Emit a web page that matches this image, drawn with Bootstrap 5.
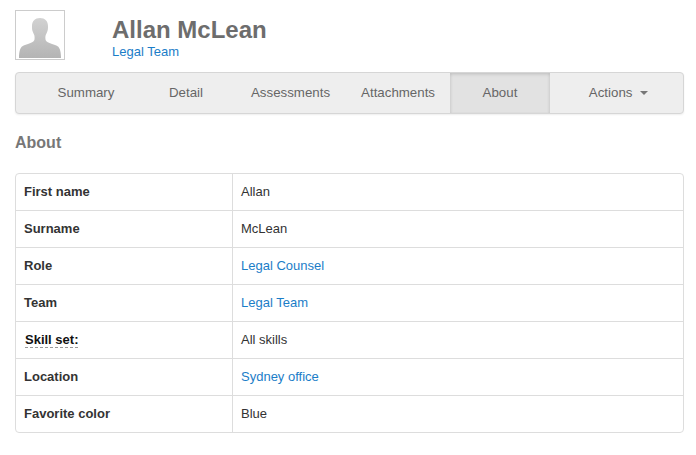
<!DOCTYPE html>
<html lang="en">
<head>
    <meta charset="UTF-8">
    <meta name="viewport" content="width=device-width, initial-scale=1.0">
    <title>Allan McLean - About</title>
    <link rel="stylesheet" href="https://cdn.jsdelivr.net/npm/bootstrap@5.3.0/dist/css/bootstrap.min.css">
    <style>
        body {
            font-family: "Liberation Sans", Arial, sans-serif;
            font-size: 13px;
            color: #333;
            background: #fff;
            padding: 10px 12px 0 15px;
        }
        a { color: #1b7dc8; text-decoration: none; }
        .profile-pic {
            width: 50px;
            height: 50px;
            border: 1px solid #ccc;
            padding: 1px;
            flex: none;
        }
        .profile-pic svg { display: block; width: 100%; height: 100%; }
        .profile-text { margin-left: 47px; padding-top: 6px; }
        .profile-name {
            font-size: 24px;
            font-weight: 700;
            line-height: 28px;
            color: #6d6d6d;
            margin: 0;
        }
        .profile-team { line-height: 15px; margin-top: 0; }
        .tab-bar {
            height: 42px;
            margin-top: 12px;
            padding-left: 20px;
            background: #eee;
            border: 1px solid #d6d6d6;
            border-radius: 4px;
            box-shadow: 0 1px 2px rgba(0,0,0,.07);
        }
        .tab-bar .nav-link {
            min-width: 100px;
            height: 40px;
            line-height: 40px;
            padding: 0 15px;
            text-align: center;
            color: #666;
            font-size: 13.3px;
        }
        .tab-bar .nav-link.active {
            background: #e2e2e2;
            box-shadow: inset 0 2px 3px rgba(0,0,0,.1), inset 2px 0 2px rgba(0,0,0,.03), inset -2px 0 2px rgba(0,0,0,.03);
        }
        .tab-grow { flex: 1 1 auto; }
        .tab-bar .tab-grow .nav-link { padding-left: 19px; }
        .tab-bar .tab-wide { padding-left: 16px; }
        .tab-caret {
            display: inline-block;
            margin-left: 4px;
            vertical-align: middle;
            border-top: 4px solid #777;
            border-left: 4px solid transparent;
            border-right: 4px solid transparent;
        }
        .section-title {
            font-size: 16px;
            font-weight: 700;
            line-height: 20px;
            color: #777;
            margin: 19px 0 20px;
        }
        .about-box {
            border: 1px solid #ddd;
            border-radius: 4px;
            overflow: hidden;
        }
        .about-table { margin: 0; font-size: 13px; border-collapse: separate; border-spacing: 0; }
        .about-table th, .about-table td {
            height: 37px;
            padding: 0 8px;
            vertical-align: middle;
            color: #333;
            border-bottom: 1px solid #ddd;
        }
        .about-table a { color: #1b7dc8; }
        .about-table tr:last-child th, .about-table tr:last-child td { border-bottom: 0; height: 36px; }
        .about-table th { width: 217px; border-right: 1px solid #ddd; font-weight: 700; }
        .hint-label {
            margin-left: 1px;
            color: #111;
            border-bottom: 1px dashed #999;
        }
    </style>
</head>
<body>
    <div class="d-flex">
        <div class="profile-pic">
            <svg viewBox="0 0 46 46" aria-hidden="true">
                <defs>
                    <linearGradient id="avatarFill" x1="0" y1="0" x2="0" y2="1">
                        <stop offset="0" stop-color="#d2d2d2"/>
                        <stop offset="1" stop-color="#b4b4b4"/>
                    </linearGradient>
                </defs>
                <path fill="url(#avatarFill)" d="M23 6c-5 0-8 3-8 8 0 2 0 4 .7 5.500.4 1 .8 2 1.300 3 .5 1 .8 2.500.5 5-.3 1.500-1.500 2.500-4 3.500-3.500 1.300-6.500 2-8.500 3.500C3.500 36 2 38.500 2 46h42c0-7.500-1.500-10-3-11.500-2-1.500-5-2.200-8.500-3.500-2.500-1-3.700-2-4-3.500-.3-2.500 0-4 .5-5 .5-1 .9-2 1.300-3 .7-1.500.7-3.500.7-5.500 0-5-3-8-8-8z"/>
            </svg>
        </div>
        <div class="profile-text">
            <h1 class="profile-name">Allan McLean</h1>
            <div class="profile-team"><a href="#">Legal Team</a></div>
        </div>
    </div>

    <ul class="nav tab-bar flex-nowrap">
        <li class="nav-item"><a class="nav-link" href="#">Summary</a></li>
        <li class="nav-item"><a class="nav-link" href="#">Detail</a></li>
        <li class="nav-item"><a class="nav-link" href="#">Assessments</a></li>
        <li class="nav-item"><a class="nav-link tab-wide" href="#">Attachments</a></li>
        <li class="nav-item"><a class="nav-link active" href="#">About</a></li>
        <li class="nav-item tab-grow"><a class="nav-link" href="#">Actions <span class="tab-caret"></span></a></li>
    </ul>

    <h2 class="section-title">About</h2>

    <div class="about-box">
        <table class="table about-table">
            <tbody>
                <tr><th>First name</th><td>Allan</td></tr>
                <tr><th>Surname</th><td>McLean</td></tr>
                <tr><th>Role</th><td><a href="#">Legal Counsel</a></td></tr>
                <tr><th>Team</th><td><a href="#">Legal Team</a></td></tr>
                <tr><th><span class="hint-label">Skill set:</span></th><td>All skills</td></tr>
                <tr><th>Location</th><td><a href="#">Sydney office</a></td></tr>
                <tr><th>Favorite color</th><td>Blue</td></tr>
            </tbody>
        </table>
    </div>
</body>
</html>
